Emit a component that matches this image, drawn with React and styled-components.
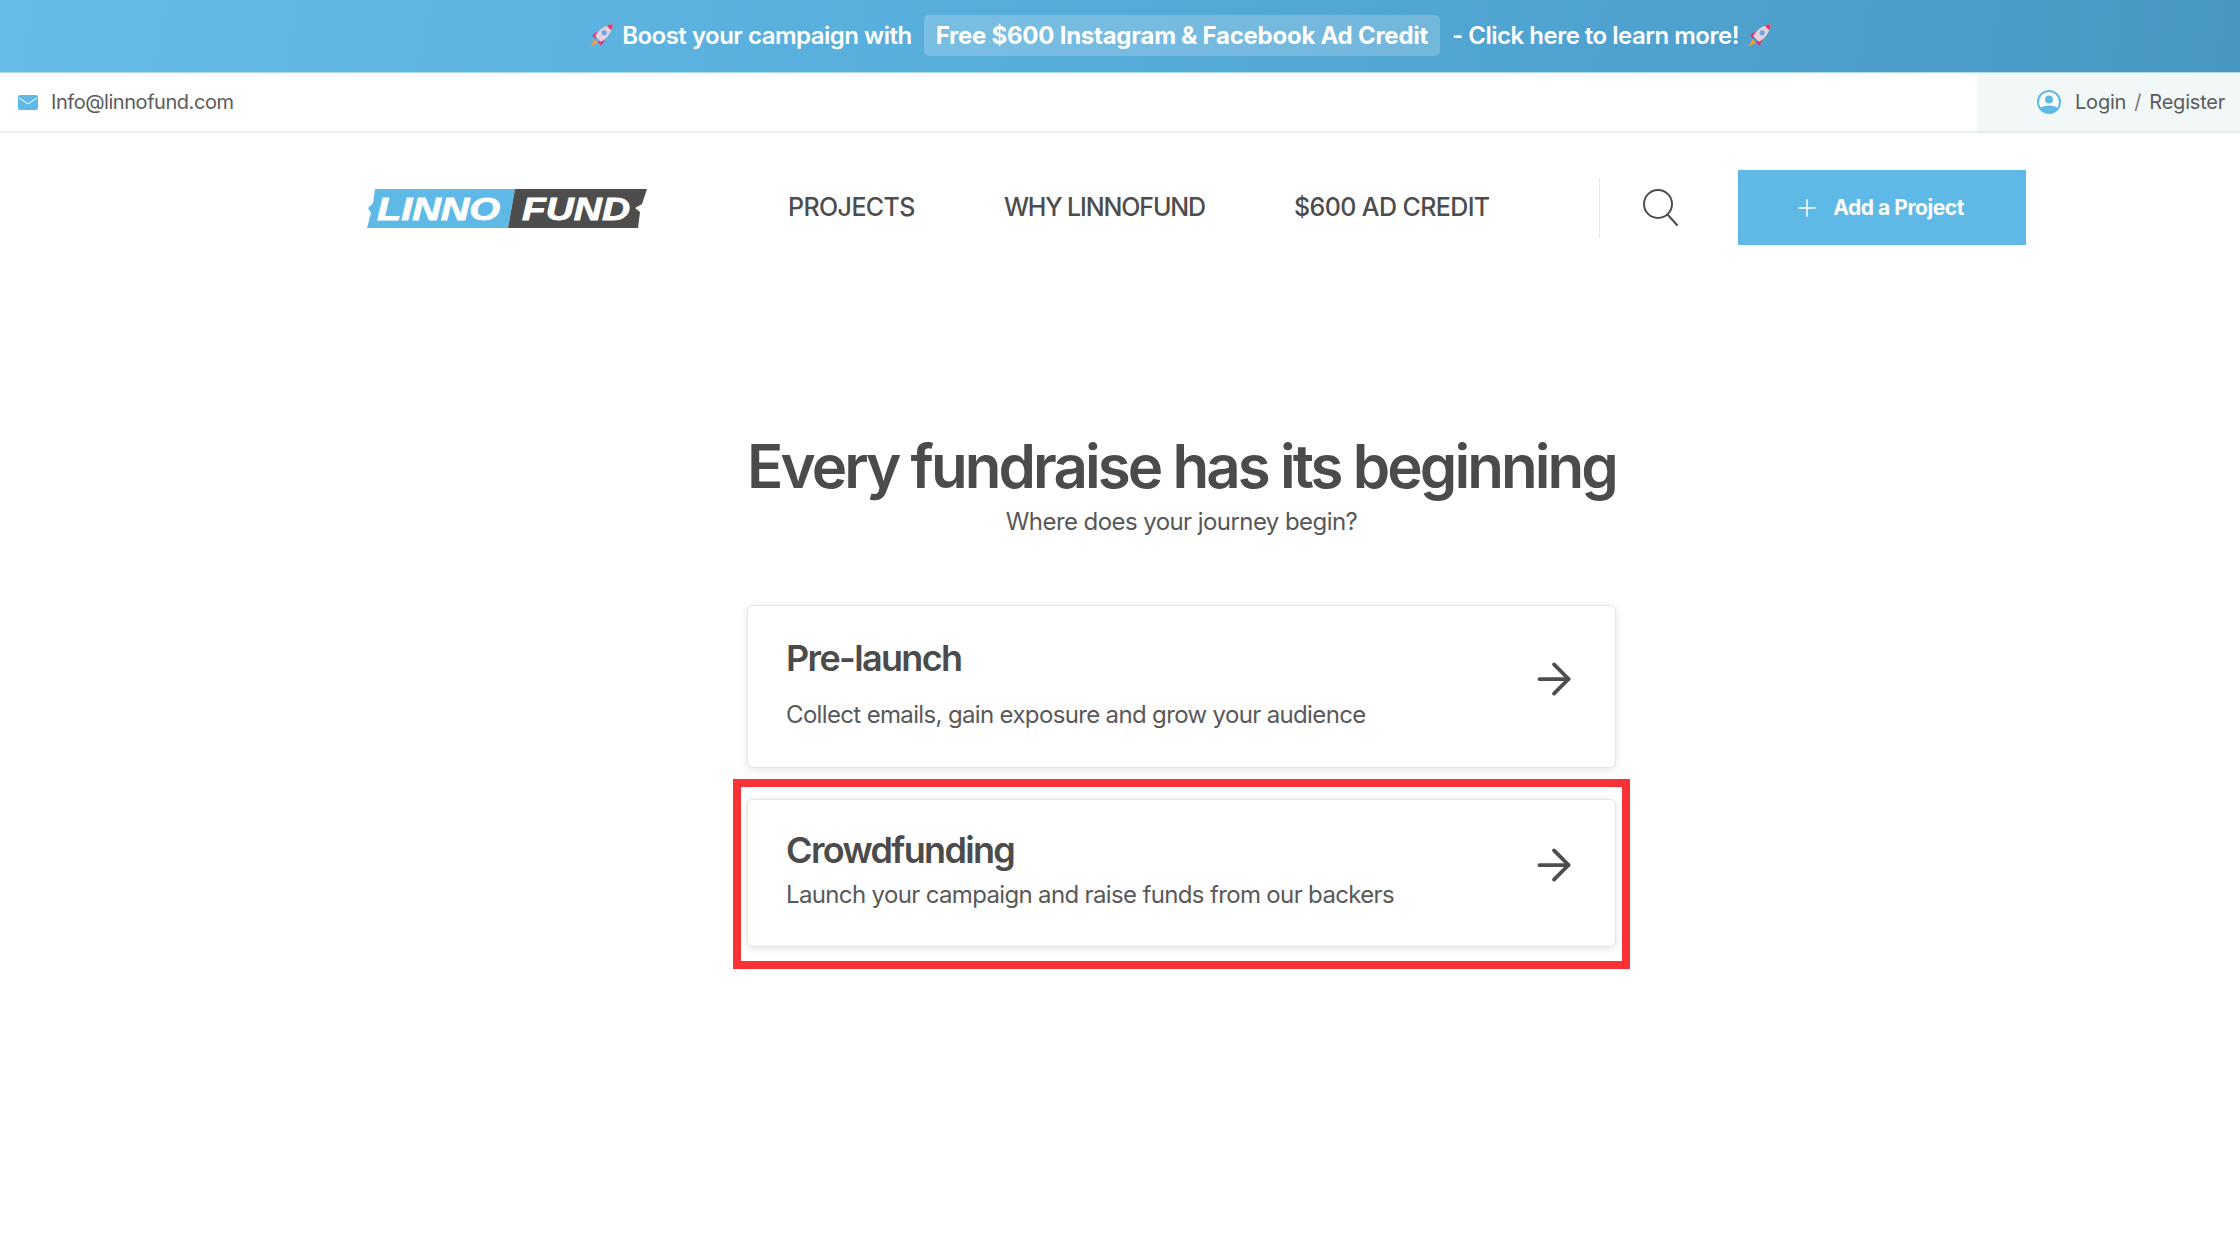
import React from 'react';
import styled, { createGlobalStyle } from 'styled-components';
import { ArrowRight, Plus } from 'lucide-react';

const GlobalStyle = createGlobalStyle`
  html, body { margin: 0; padding: 0; background: #fff; }
  * { box-sizing: border-box; }
  body { font-family: "Inter", "Open Sans", sans-serif; color: #4b4b4b; }
`;

const Rocket = () => (
  <RocketSvg viewBox="0 0 24 24">
    <path d="M6 15 L2 22 L9 18.5 Z" fill="#f59a3c" />
    <path d="M8 8.5 L3.5 12 L7 15.5 Z M15 16 L12 21 L8.5 17.5 Z" fill="#f0307c" />
    <path d="M22 2 C16 2.5 9.5 6.5 6.5 12.5 L11.5 17.5 C17.5 14.5 21.5 8 22 2 Z" fill="#e4d3dc" />
    <path d="M22 2 C20.2 2.2 18.4 2.6 16.6 3.4 L20.6 7.4 C21.4 5.6 21.8 3.8 22 2 Z" fill="#f0306c" />
    <circle cx="14.4" cy="9.6" r="2.3" fill="#6fa6e8" />
  </RocketSvg>
);

const Logo = () => (
  <svg width="284" height="40" viewBox="0 0 284 40">
    <polygon points="9,0 149,0 142,39 1,39 5,24 2,19 7,14" fill="#5fb9e7" />
    <polygon points="149,0 281,0 276,15 269,19 274,23 272,39 142,39" fill="#4d4d4d" />
    <LogoText x="11" y="31" textLength="123" lengthAdjust="spacingAndGlyphs">LINNO</LogoText>
    <LogoText x="156" y="31" textLength="108" lengthAdjust="spacingAndGlyphs">FUND</LogoText>
  </svg>
);

const App = () => (
  <>
    <GlobalStyle />
    <Banner>
      <Rocket />
      <BannerText>Boost your campaign with</BannerText>
      <BannerPill>Free $600 Instagram &amp; Facebook Ad Credit</BannerPill>
      <BannerText>- Click here to learn more!</BannerText>
      <Rocket />
    </Banner>

    <TopBar>
      <Contact>
        <svg width="20" height="15" viewBox="0 0 20 15">
          <rect width="20" height="15" rx="2" fill="#5fb9e7" />
          <path d="M1 3 L10 9 L19 3" fill="none" stroke="#fff" strokeWidth="1" />
        </svg>
        <span>Info@linnofund.com</span>
      </Contact>
      <Account>
        <svg width="24" height="24" viewBox="0 0 24 24">
          <circle cx="12" cy="12" r="11" fill="#fff" stroke="#5fb9e7" strokeWidth="2" />
          <circle cx="12" cy="9.5" r="4" fill="#5fb9e7" />
          <path d="M3.5 18 C6 14.5 18 14.5 20.5 18 C18 24 6 24 3.5 18 Z" fill="#5fb9e7" />
        </svg>
        <AccountLinks>
          <span>Login</span>
          <Slash>/</Slash>
          <span>Register</span>
        </AccountLinks>
      </Account>
    </TopBar>

    <Header>
      <LogoLink><Logo /></LogoLink>
      <Nav>
        <NavItem>PROJECTS</NavItem>
        <NavItem $tight>WHY LINNOFUND</NavItem>
        <NavItem>$600 AD CREDIT</NavItem>
      </Nav>
      <Divider />
      <SearchButton>
        <svg width="38" height="38" viewBox="0 0 38 38" fill="none" stroke="#4d4d4d" strokeWidth="2">
          <circle cx="17" cy="16" r="14" />
          <path d="M27 27 L36 37" strokeLinecap="round" />
        </svg>
      </SearchButton>
      <AddButton>
        <Plus size={28} strokeWidth={1.25} />
        Add a Project
      </AddButton>
    </Header>

    <Main>
      <Title>Every fundraise has its beginning</Title>
      <Subtitle>Where does your journey begin?</Subtitle>

      <Card $height={163} $top={30} $gap={19} $spaced>
        <div>
          <CardTitle>Pre-launch</CardTitle>
          <CardText>Collect emails, gain exposure and grow your audience</CardText>
        </div>
        <CardArrow><ArrowRight size={50} strokeWidth={1.8} /></CardArrow>
      </Card>

      <Highlight>
        <Card $height={148} $top={28} $gap={7}>
          <div>
            <CardTitle>Crowdfunding</CardTitle>
            <CardText>Launch your campaign and raise funds from our backers</CardText>
          </div>
          <CardArrow><ArrowRight size={50} strokeWidth={1.8} /></CardArrow>
        </Card>
      </Highlight>
    </Main>
  </>
);

const RocketSvg = styled.svg`
  width: 27px;
  height: 27px;
  margin: 0 -5px;
  flex: none;
`;

const LogoText = styled.text`
  font-family: "Liberation Sans", Arial, sans-serif;
  font-style: italic;
  font-weight: 700;
  font-size: 31px;
  fill: #fff;
  stroke: #fff;
  stroke-width: 0.8px;
`;

const Banner = styled.div`
  height: 73px;
  padding: 0 0 2px 121px;
  display: flex;
  align-items: center;
  justify-content: center;
  gap: 12px;
  background: linear-gradient(100deg, #66bbe8 0%, #55abd9 50%, #4897c3 100%);
  border-bottom: 1px solid #a9d8ef;
  color: #fff;
  font-size: 24px;
  font-weight: 600;
  letter-spacing: -0.5px;
`;

const BannerText = styled.span`
  white-space: nowrap;
`;

const BannerPill = styled.span`
  height: 41px;
  padding: 0 12px;
  display: flex;
  align-items: center;
  border-radius: 5px;
  background: rgba(255, 255, 255, 0.2);
  font-weight: 700;
  letter-spacing: -0.25px;
  white-space: nowrap;
`;

const TopBar = styled.div`
  height: 60px;
  display: flex;
  align-items: stretch;
  justify-content: space-between;
  border-bottom: 2px solid #e6eeee;
  font-size: 20px;
  color: #5b5b5b;
`;

const Contact = styled.div`
  display: flex;
  align-items: center;
  gap: 13px;
  padding-left: 18px;
  letter-spacing: -0.45px;
`;

const Account = styled.div`
  width: 263px;
  display: flex;
  align-items: center;
  gap: 14px;
  padding-left: 60px;
  background: #f2f7f8;
`;

const AccountLinks = styled.div`
  display: flex;
  gap: 8px;
  letter-spacing: -0.2px;
  white-space: nowrap;
`;

const Slash = styled.span`
  color: #777;
`;

const Header = styled.header`
  height: 149px;
  padding: 37px 0 0 366px;
  display: flex;
  align-items: flex-start;
`;

const LogoLink = styled.a`
  width: 284px;
  height: 40px;
  margin-top: 19px;
  flex: none;
`;

const Nav = styled.nav`
  display: flex;
  gap: 89px;
  margin-left: 138px;
  height: 74px;
  align-items: center;
`;

const NavItem = styled.a`
  font-size: 25px;
  font-weight: 500;
  letter-spacing: ${({ $tight }) => ($tight ? '-1.14px' : '-0.6px')};
  color: #4d4d4d;
  white-space: nowrap;
`;

const Divider = styled.div`
  width: 1px;
  height: 60px;
  margin: 8px 0 0 109px;
  background: #e8e8e8;
`;

const SearchButton = styled.div`
  width: 38px;
  height: 38px;
  margin: 18px 0 0 41px;
`;

const AddButton = styled.a`
  width: 288px;
  height: 75px;
  margin-left: 59px;
  padding-right: 6px;
  display: flex;
  align-items: center;
  justify-content: center;
  gap: 12px;
  background: #5fb9e7;
  color: #fff;
  font-size: 21px;
  font-weight: 700;
  letter-spacing: -0.45px;
`;

const Main = styled.main`
  width: 869px;
  margin: 0 0 0 747px;
  padding-top: 148px;
`;

const Title = styled.h1`
  margin: 0;
  font-size: 60px;
  line-height: 72px;
  font-weight: 600;
  letter-spacing: -2.93px;
  text-align: center;
  white-space: nowrap;
  color: #4b4b4b;
`;

const Subtitle = styled.p`
  margin: 4px 0 0;
  font-size: 24px;
  line-height: 32px;
  letter-spacing: -0.57px;
  text-align: center;
  color: #575757;
`;

const Card = styled.div`
  height: ${({ $height }) => $height}px;
  margin-top: ${({ $spaced }) => ($spaced ? '67px' : '0')};
  padding: ${({ $top }) => $top}px 38px 0;
  display: flex;
  justify-content: space-between;
  border: 1px solid #e4e4e4;
  border-radius: 6px;
  background: #fff;
  box-shadow: 0 2px 8px rgba(0, 0, 0, 0.1);
  & > div > p { margin-top: ${({ $gap }) => $gap}px; }
`;

const CardTitle = styled.h2`
  margin: 0;
  font-size: 36px;
  line-height: 44px;
  font-weight: 600;
  letter-spacing: -1.65px;
  color: #4b4b4b;
`;

const CardText = styled.p`
  margin: 0;
  font-size: 24px;
  line-height: 32px;
  letter-spacing: -0.65px;
  color: #595959;
`;

const CardArrow = styled.div`
  align-self: center;
  height: 50px;
  margin: 0 -2px 45px 0;
  color: #4d4d4d;
`;

const Highlight = styled.div`
  margin: 11px -14px 0;
  padding: 12px 6px 14px;
  border: 8px solid #fa3236;
`;

export default App;
